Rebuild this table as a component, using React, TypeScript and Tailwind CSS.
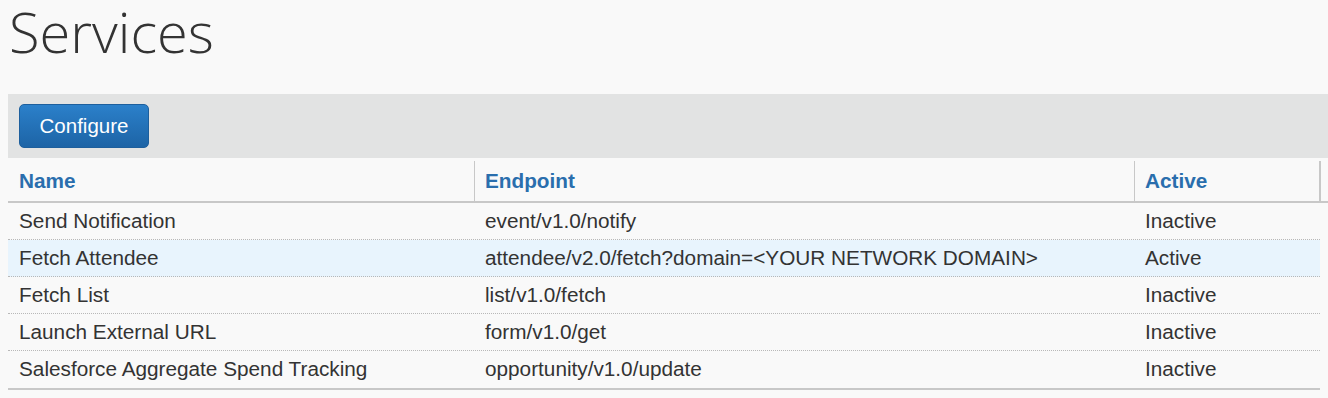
import React from "react";

const rows = [
  { name: "Send Notification", endpoint: "event/v1.0/notify", active: "Inactive" },
  { name: "Fetch Attendee", endpoint: "attendee/v2.0/fetch?domain=<YOUR NETWORK DOMAIN>", active: "Active", hl: true },
  { name: "Fetch List", endpoint: "list/v1.0/fetch", active: "Inactive" },
  { name: "Launch External URL", endpoint: "form/v1.0/get", active: "Inactive" },
  { name: "Salesforce Aggregate Spend Tracking", endpoint: "opportunity/v1.0/update", active: "Inactive" },
];

export default function App() {
  return (
    <div className="min-h-screen bg-[#f9f9f9] font-['Liberation_Sans',Arial,sans-serif] text-[#333]">
      <h1 className="pl-[9px] text-[56px] leading-[62px] font-light font-['Open_Sans',sans-serif] text-[#333]">
        Services
      </h1>
      <div className="ml-[8px] mt-[32px] h-[64px] bg-[#e2e3e3] pl-[11px] pt-[10px]">
        <button className="h-[44px] w-[130px] rounded-[5px] border border-[#1d5f9d] bg-gradient-to-b from-[#2b80ca] to-[#1d64a6] text-[20.5px] text-white">
          Configure
        </button>
      </div>
      <div className="ml-[8px]">
        <div className="grid grid-cols-[466px_660px_185px_1fr] h-[45px] pt-[3px] border-b-2 border-[#c8c8c8]">
          <div className="flex items-center pl-[11px] text-[20.75px] font-bold text-[#2a6ead]">Name</div>
          <div className="flex items-center pl-[10px] border-l border-[#c8c8c8] text-[20.75px] font-bold text-[#2a6ead]">Endpoint</div>
          <div className="flex items-center pl-[10px] border-l border-[#c8c8c8] text-[20.75px] font-bold text-[#2a6ead]">Active</div>
          <div className="border-l-2 border-[#c8c8c8]"></div>
        </div>
        <div className="w-[1312px] border-b-2 border-[#c8c8c8]">
          {rows.map((r, i) => (
            <div
              key={i}
              className={`grid grid-cols-[466px_660px_186px] h-[37px] items-center text-[20.75px] ${
                i < rows.length - 1 ? "border-b border-dotted border-[#b8b8b8]" : ""
              } ${r.hl ? "bg-[#e8f4fd]" : ""}`}
            >
              <div className="pl-[11px] pb-[1px] whitespace-nowrap">{r.name}</div>
              <div className="pl-[11px] pb-[1px] whitespace-nowrap">{r.endpoint}</div>
              <div className="pl-[11px] pb-[1px] whitespace-nowrap">{r.active}</div>
            </div>
          ))}
        </div>
      </div>
    </div>
  );
}
